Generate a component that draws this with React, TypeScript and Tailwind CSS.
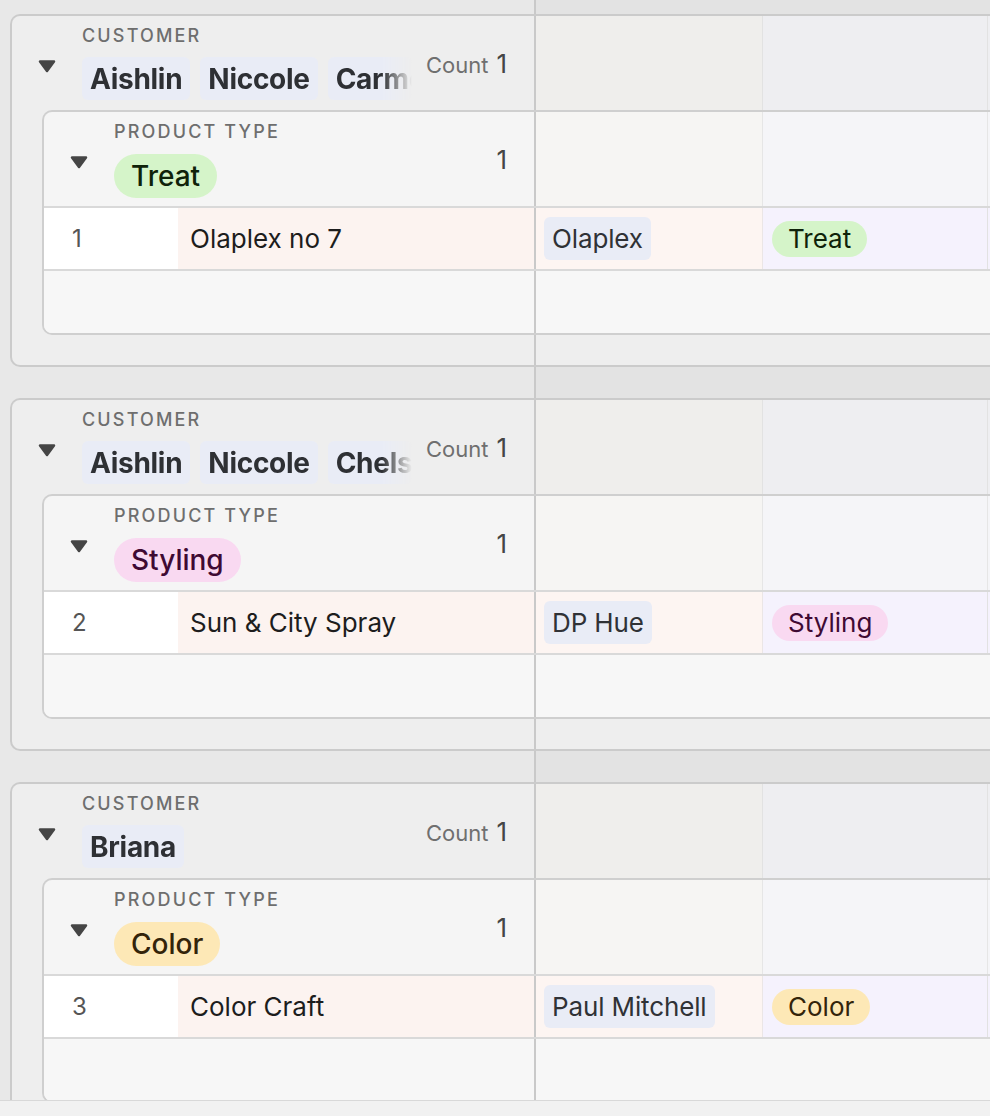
import React from "react";

type Tone = "treat" | "styling" | "color";

interface Group {
  customers: string[];
  type: Tone;
  typeLabel: string;
  row: number;
  product: string;
  brand: string;
}

const groups: Group[] = [
  { customers: ["Aishlin", "Niccole", "Carmen"], type: "treat", typeLabel: "Treat", row: 1, product: "Olaplex no 7", brand: "Olaplex" },
  { customers: ["Aishlin", "Niccole", "Chelsea"], type: "styling", typeLabel: "Styling", row: 2, product: "Sun & City Spray", brand: "DP Hue" },
  { customers: ["Briana"], type: "color", typeLabel: "Color", row: 3, product: "Color Craft", brand: "Paul Mitchell" },
];

const toneClass: Record<Tone, string> = {
  treat: "bg-[#d5f4c9] text-[#0f2209]",
  styling: "bg-[#f9d9f1] text-[#3f0a33]",
  color: "bg-[#fde8b6] text-[#33240a]",
};

function Caret() {
  return (
    <svg width="20" height="14" viewBox="0 0 20 14">
      <polygon
        points="3,2.5 17,2.5 10,12"
        fill="#454545"
        stroke="#454545"
        strokeWidth="2.5"
        strokeLinejoin="round"
      />
    </svg>
  );
}

function Spacer({ h }: { h: string }) {
  return (
    <div className={`flex ${h}`}>
      <div className="w-[534px] bg-[#e8e8e8]" />
      <div className="flex-1 border-l-2 border-[#c9c9c9] bg-[#e3e3e3]" />
    </div>
  );
}

function GroupBlock({ g }: { g: Group }) {
  return (
    <div className="ml-[10px] border-2 border-r-0 border-[#cbcbcb] rounded-l-[10px] bg-[#eeeeee] overflow-hidden">
      {/* customer header */}
      <div className="flex h-[94px]">
        <div className="w-[522px] flex pl-[25px] pr-[27px]">
          <div className="w-[20px] pt-[43px] shrink-0">
            <Caret />
          </div>
          <div className="ml-[25px] flex-1 min-w-0 pt-[9px]">
            <div className="h-[22px] leading-[22px] text-[18px] font-medium tracking-[0.12em] text-[#6e6e6e]">
              CUSTOMER
            </div>
            <div className="mt-[10px] flex gap-[10px] overflow-hidden [mask-image:linear-gradient(to_right,black_calc(100%-30px),transparent)]">
              {g.customers.map((c, i) => (
                <span
                  key={c}
                  className={`h-[43px] flex items-center px-[8px] rounded-[6px] bg-[#e9ecf6] text-[28px] font-bold tracking-[-0.01em] text-[#2e3034] whitespace-nowrap overflow-hidden ${
                    i === g.customers.length - 1 ? "min-w-0" : "shrink-0"
                  }`}
                >
                  {c}
                </span>
              ))}
            </div>
          </div>
          <div className="ml-[14px] pt-[33px] flex items-baseline gap-[8px] self-start shrink-0">
            <span className="text-[22px] leading-[30px] text-[#6f6f6f]">Count</span>
            <span className="text-[26px] leading-[30px] text-[#454545]">1</span>
          </div>
        </div>
        <div className="w-[228px] border-l-2 border-[#c9c9c9] bg-[#efeeec]" />
        <div className="w-[225px] border-l border-[#e2e2e2] bg-[#eeeef1]" />
        <div className="flex-1 border-l border-[#e2e2e2] bg-[#eeeef1]" />
      </div>

      {/* product type group */}
      <div className="ml-[30px] border-2 border-r-0 border-[#cfcfcf] rounded-l-[10px] bg-[#f5f5f5] overflow-hidden">
        <div className="flex h-[94px]">
          <div className="w-[490px] flex pl-[25px] pr-[27px]">
            <div className="w-[20px] pt-[43px] shrink-0">
              <Caret />
            </div>
            <div className="ml-[25px] flex-1 min-w-0 pt-[9px]">
              <div className="h-[22px] leading-[22px] text-[18px] font-medium tracking-[0.12em] text-[#6e6e6e]">
                PRODUCT TYPE
              </div>
              <div className="mt-[11px] flex">
                <span className={`h-[44px] flex items-center px-[17px] rounded-full text-[28px] font-medium ${toneClass[g.type]}`}>
                  {g.typeLabel}
                </span>
              </div>
            </div>
            <div className="pt-[33px] self-start">
              <span className="text-[26px] leading-[30px] text-[#454545]">1</span>
            </div>
          </div>
          <div className="w-[228px] border-l-2 border-[#c9c9c9] bg-[#f6f5f3]" />
          <div className="w-[225px] border-l border-[#e6e6e6] bg-[#f5f5f8]" />
          <div className="flex-1 border-l border-[#e6e6e6] bg-[#f5f5f8]" />
        </div>

        {/* record */}
        <div className="flex h-[63px] border-t-2 border-[#d9d9d9]">
          <div className="w-[134px] bg-white pl-[28px] flex items-center text-[24px] text-[#555555]">
            {g.row}
          </div>
          <div className="w-[356px] bg-[#fcf3f0] pl-[12px] flex items-center text-[26px] text-[#1d1d1d]">
            {g.product}
          </div>
          <div className="w-[228px] border-l-2 border-[#c9c9c9] bg-[#fdf5f2] pl-[8px] flex items-center">
            <span className="h-[43px] flex items-center px-[8px] rounded-[6px] bg-[#e9ecf6] text-[26px] tracking-[-0.005em] text-[#303236]">
              {g.brand}
            </span>
          </div>
          <div className="w-[225px] border-l border-[#ebe6e6] bg-[#f5f2fd] pl-[9px] flex items-center">
            <span className={`h-[36px] flex items-center px-[16px] rounded-full text-[26px] ${toneClass[g.type]}`}>
              {g.typeLabel}
            </span>
          </div>
          <div className="flex-1 border-l border-[#e2e2e2] bg-[#f5f2fd]" />
        </div>

        {/* add row */}
        <div className="flex h-[64px] border-t-2 border-[#d9d9d9]">
          <div className="w-[490px] bg-[#f7f7f7]" />
          <div className="flex-1 border-l-2 border-[#c9c9c9] bg-[#f7f7f7]" />
        </div>
      </div>

      <div className="flex h-[30px]">
        <div className="w-[522px]" />
        <div className="flex-1 border-l-2 border-[#c9c9c9]" />
      </div>
    </div>
  );
}

export default function App() {
  return (
    <div className="h-[1116px] w-full overflow-hidden flex flex-col bg-[#e8e8e8] font-['Inter','Noto_Sans',sans-serif]">
      <div className="flex-1 min-h-0 overflow-hidden">
        <Spacer h="h-[14px]" />
        <GroupBlock g={groups[0]} />
        <Spacer h="h-[31px]" />
        <GroupBlock g={groups[1]} />
        <Spacer h="h-[31px]" />
        <GroupBlock g={groups[2]} />
      </div>
      <div className="h-[16px] shrink-0 border-t border-[#d8d8d8] bg-[#f1f1f1]" />
    </div>
  );
}
